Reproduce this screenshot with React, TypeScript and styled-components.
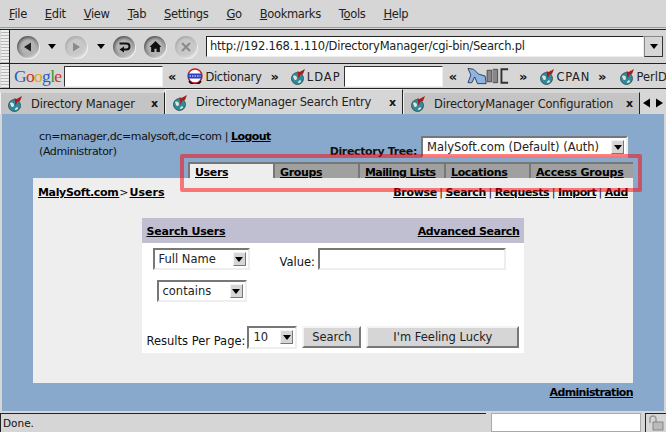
import React from "react";
import styled, { createGlobalStyle } from "styled-components";

const GlobalStyle = createGlobalStyle`
	html, body {
		margin: 0;
		padding: 0;
		background: #d6d6d6;
	}
`;

const Globe = () => (
	<svg width="17" height="17" viewBox="0 0 17 17">
		<circle cx="7.5" cy="10.5" r="6" fill="#2f8a9c" stroke="#37505a" strokeWidth="0.9" />
		<path d="M3 8c2-1 4 0 4 2s-2 3-3 1zM8 14c1-2 3-2 3-1s-1 2-3 2z" fill="#d8e8dc" />
		<path d="M15 1L9.5 4 7.500 3l1 8 2-4.500 2.500-.5z" fill="#a81c1c" />
	</svg>
);

const Arrow = ({ dir, color }: { dir: string; color: string }) => (
	<svg width="12" height="12" viewBox="0 0 12 12">
		{dir === "left" && <path d="M9 1.500v9L2 6z" fill={color} />}
		{dir === "right" && <path d="M3 1.500v9L10 6z" fill={color} />}
	</svg>
);

const App = () => {
	return (
		<Page>
			<GlobalStyle />
			<MenuBar>
				{[
					["F", "ile"],
					["E", "dit"],
					["V", "iew"],
					["T", "ab"],
					["S", "ettings"],
					["G", "o"],
					["B", "ookmarks"],
				].map(([a, b]) => (
					<MenuItem key={a}>
						<u>{a}</u>
						{b}
					</MenuItem>
				))}
				<MenuItem>
					T<u>o</u>ols
				</MenuItem>
				<MenuItem>
					<u>H</u>elp
				</MenuItem>
			</MenuBar>
			<NavBar>
				<Grip />
				<NavButton $left={7}>
					<Arrow dir="left" color="#222" />
				</NavButton>
				<Caret $left={9} />
				<NavButton $left={9} $off>
					<Arrow dir="right" color="#8a8a8a" />
				</NavButton>
				<Caret $left={10} />
				<NavButton $left={8}>
					<svg width="14" height="14" viewBox="0 0 14 14">
						<path d="M2.500 3.500h7a2.800 2.800 0 0 1 0 6H6" fill="none" stroke="#111" strokeWidth="2" />
						<path d="M7 6.500l-4.500 3 4.500 3z" fill="#111" />
					</svg>
				</NavButton>
				<NavButton $left={9}>
					<svg width="13" height="13" viewBox="0 0 12 12">
						<path d="M6 1L.5 6.500H2V11h3V8h2v3h3V6.500h1.500z" fill="#111" />
					</svg>
				</NavButton>
				<NavButton $left={9} $off>
					<svg width="12" height="12" viewBox="0 0 12 12">
						<path d="M2 2l8 8M10 2l-8 8" stroke="#8a8a8a" strokeWidth="2" />
					</svg>
				</NavButton>
				<UrlBox>http://192.168.1.110/DirectoryManager/cgi-bin/Search.pl</UrlBox>
				<UrlDrop>
					<DropTriangle />
				</UrlDrop>
			</NavBar>
			<BookmarkBar>
				<Grip />
				<GoogleLogo>
					<span style={{ color: "#2a5bc8" }}>G</span>
					<span style={{ color: "#d0301f" }}>o</span>
					<span style={{ color: "#e0a810" }}>o</span>
					<span style={{ color: "#2a5bc8" }}>g</span>
					<span style={{ color: "#2f9a3a" }}>l</span>
					<span style={{ color: "#d0301f" }}>e</span>
				</GoogleLogo>
				<BarInput $left={3} />
				<Chevron $left={5}>«</Chevron>
				<DictIcon $left={11}>
					<svg width="16" height="16" viewBox="0 0 16 16">
						<circle cx="8" cy="8" r="7" fill="#fff" stroke="#c02020" strokeWidth="1.400" />
						<path d="M2 13a7 7 0 0 0 12 0" fill="none" stroke="#111" strokeWidth="1.600" />
						<rect x="1" y="5.500" width="14" height="5" fill="#2a3fc0" />
						<path d="M2.500 8h11" stroke="#fff" strokeWidth="1.200" strokeDasharray="1.500 1" />
					</svg>
				</DictIcon>
				<BarLabel $left={2} $spacing={-0.3}>
					Dictionary
				</BarLabel>
				<Chevron $left={9}>»</Chevron>
				<DictIcon $left={11}>
					<Globe />
				</DictIcon>
				<BarLabel $left={0} $spacing={1}>
					LDAP
				</BarLabel>
				<BarInput $left={3} />
				<Chevron $left={6}>«</Chevron>
				<DictIcon $left={10}>
					<svg width="44" height="18" viewBox="0 0 46 18">
						<path d="M1 1l6 1 5 5 7 2 1 8H11L8 10 5 16H1l3-8z" fill="#8db4e4" stroke="#234" strokeWidth="0.900" />
						<path d="M21 3h5v12h-5zM27 2h5v14h-5" fill="#888" stroke="#333" strokeWidth="0.800" />
						<path d="M43 2h-7v14h7" fill="none" stroke="#333" strokeWidth="2" />
					</svg>
				</DictIcon>
				<Chevron $left={8}>»</Chevron>
				<DictIcon $left={12}>
					<Globe />
				</DictIcon>
				<BarLabel $left={0} $spacing={0.7}>
					CPAN
				</BarLabel>
				<Chevron $left={8}>»</Chevron>
				<DictIcon $left={13}>
					<Globe />
				</DictIcon>
				<BarLabel $left={0} $spacing={0}>
					PerlD
				</BarLabel>
			</BookmarkBar>
			<TabStrip>
				<BrowserTab $width={165}>
					<Globe />
					<TabTitle>Directory Manager</TabTitle>
					<TabClose>x</TabClose>
				</BrowserTab>
				<BrowserTab $width={238} $active>
					<Globe />
					<TabTitle>DirectoryManager Search Entry</TabTitle>
					<TabClose>x</TabClose>
				</BrowserTab>
				<BrowserTab $width={237}>
					<Globe />
					<TabTitle>DirectoryManager Configuration</TabTitle>
					<TabClose>x</TabClose>
				</BrowserTab>
				<TabArrows>
					<Arrow dir="left" color="#000" />
					<Arrow dir="right" color="#000" />
				</TabArrows>
			</TabStrip>
			<Content>
				<TopRow>
					<UserInfo>
						cn=manager,dc=malysoft,dc=com | <BoldLink $spacing={-0.6}>Logout</BoldLink>
						<br />
						(Administrator)
					</UserInfo>
					<TreePicker>
						<TreeLabel>Directory Tree:</TreeLabel>
						<FakeSelect $width={207} $height={22}>
							MalySoft.com (Default) (Auth)
							<SelectButton>
								<DropTriangle />
							</SelectButton>
						</FakeSelect>
					</TreePicker>
				</TopRow>
				<SectionTabs>
					<SectionTab $width={85} $active>
						<BoldLink>Users</BoldLink>
					</SectionTab>
					<SectionTab $width={85}>
						<BoldLink>Groups</BoldLink>
					</SectionTab>
					<SectionTab $width={86}>
						<BoldLink $spacing={-0.6}>Mailing Lists</BoldLink>
					</SectionTab>
					<SectionTab $width={85}>
						<BoldLink>Locations</BoldLink>
					</SectionTab>
					<SectionTab $width={104}>
						<BoldLink $spacing={-0.2}>Access Groups</BoldLink>
					</SectionTab>
				</SectionTabs>
				<Panel>
					<PanelHead>
						<Crumbs>
							<BoldLink>MalySoft.com </BoldLink>&gt; <BoldLink $spacing={0}>Users</BoldLink>
						</Crumbs>
						<ActionLinks>
							<BoldLink>Browse</BoldLink> | <BoldLink>Search</BoldLink> | <BoldLink>Requests</BoldLink> |{" "}
							<BoldLink $spacing={-0.6}>Import</BoldLink> | <BoldLink>Add</BoldLink>
						</ActionLinks>
					</PanelHead>
					<SearchBox>
						<SearchTitle>
							<BoldLink $spacing={-0.2}>Search Users</BoldLink>
							<BoldLink>Advanced Search</BoldLink>
						</SearchTitle>
						<SearchBody>
							<FieldRow>
								<FakeSelect $width={97} $height={22}>
									Full Name
									<SelectButton>
										<DropTriangle />
									</SelectButton>
								</FakeSelect>
								<ValueLabel>Value:</ValueLabel>
								<ValueInput />
							</FieldRow>
							<ContainsRow>
								<FakeSelect $width={90} $height={22}>
									contains
									<SelectButton>
										<DropTriangle />
									</SelectButton>
								</FakeSelect>
							</ContainsRow>
							<SubmitRow>
								<ResultsLabel>Results Per Page:</ResultsLabel>
								<FakeSelect $width={50} $height={23}>
									10
									<SelectButton>
										<DropTriangle />
									</SelectButton>
								</FakeSelect>
								<PushButton $width={59}>Search</PushButton>
								<PushButton $width={153}>I'm Feeling Lucky</PushButton>
							</SubmitRow>
						</SearchBody>
					</SearchBox>
				</Panel>
				<FooterLink>
					<BoldLink $spacing={-0.63}>Administration</BoldLink>
				</FooterLink>
				<Highlight />
			</Content>
			<StatusBar>
				<StatusText>Done.</StatusText>
				<StatusBlank />
				<LockBox>
					<svg width="16" height="16" viewBox="0 0 16 16">
						<path d="M2 8V4a3 3 0 0 1 6 0v3" fill="none" stroke="#999" strokeWidth="1.500" />
						<rect x="5" y="7" width="10" height="8" fill="#bbb" stroke="#777" strokeWidth="0.800" />
					</svg>
				</LockBox>
			</StatusBar>
		</Page>
	);
};

export default App;

const uiFont = `"DejaVu Sans", sans-serif`;

const Page = styled.div`
	width: 666px;
	height: 432px;
	overflow: hidden;
	display: flex;
	flex-direction: column;
	background: #d6d6d6;
	font-family: ${uiFont};
	font-size: 12px;
	color: #111;
`;

const MenuBar = styled.div`
	height: 28px;
	box-sizing: border-box;
	display: flex;
	align-items: center;
	padding: 1px 0 0 9px;
	gap: 18px;
	border-bottom: 1px solid #9a9a9a;
	margin-bottom: 1px;
`;

const MenuItem = styled.span`
	font-size: 11.5px;
	letter-spacing: -0.35px;
	color: #222;
`;

const NavBar = styled.div`
	height: 35px;
	box-sizing: border-box;
	display: flex;
	align-items: center;
	border-top: 1px solid #222;
	border-bottom: 1px solid #222;
	padding-right: 3px;
`;

const BookmarkBar = styled.div`
	height: 25px;
	box-sizing: border-box;
	display: flex;
	align-items: center;
	border-bottom: 1px solid #222;
	overflow: hidden;
	white-space: nowrap;
`;

const Grip = styled.div`
	width: 8px;
	align-self: stretch;
	flex: none;
	margin-left: 1px;
	border-right: 1px solid #222;
	background: repeating-linear-gradient(0deg, #b8b8b8 0 1px, #eee 1px 3px);
`;

const NavButton = styled.div<{ $left: number; $off?: boolean }>`
	width: 22px;
	height: 22px;
	flex: none;
	margin-left: ${(p) => p.$left}px;
	border-radius: 50%;
	display: flex;
	align-items: center;
	justify-content: center;
	background: ${(p) =>
		p.$off
			? "radial-gradient(circle, #c8c8c8 0 45%, transparent 72%), linear-gradient(150deg, #9a9a9a, #c0c0c0 55%, #f2f2f2)"
			: "radial-gradient(circle, #b4b4b4 0 42%, transparent 72%), linear-gradient(150deg, #333, #858585 55%, #f4f4f4)"};
	box-shadow: 1px 1px 0 #efefef;
`;

const Caret = styled.div<{ $left: number }>`
	flex: none;
	margin-left: ${(p) => p.$left}px;
	width: 0;
	height: 0;
	border-left: 4px solid transparent;
	border-right: 4px solid transparent;
	border-top: 5px solid #000;
`;

const UrlBox = styled.div`
	flex: 1;
	margin-left: 9px;
	height: 21px;
	box-sizing: border-box;
	background: #fff;
	border: 1px solid #222;
	border-right-color: #eee;
	border-bottom-color: #eee;
	padding-left: 3px;
	line-height: 18px;
	font-size: 11.5px;
	letter-spacing: -0.22px;
	color: #222;
`;

const UrlDrop = styled.div`
	width: 19px;
	height: 21px;
	flex: none;
	box-sizing: border-box;
	background: #d6d6d6;
	border: 1px solid #888;
	border-right-color: #333;
	border-bottom-color: #333;
	display: flex;
	align-items: center;
	justify-content: center;
`;

const DropTriangle = styled.div`
	width: 0;
	height: 0;
	border-left: 4px solid transparent;
	border-right: 4px solid transparent;
	border-top: 5px solid #000;
`;

const GoogleLogo = styled.div`
	margin-left: 4px;
	font-family: "Liberation Serif", serif;
	font-size: 17.5px;
	letter-spacing: -0.7px;
	width: 47px;
	flex: none;
`;

const BarInput = styled.div<{ $left: number }>`
	width: 99px;
	height: 21px;
	flex: none;
	box-sizing: border-box;
	margin-left: ${(p) => p.$left}px;
	background: #fff;
	border: 1px solid #333;
	border-right-color: #eee;
	border-bottom-color: #eee;
`;

const Chevron = styled.span<{ $left: number }>`
	margin-left: ${(p) => p.$left}px;
	font-weight: bold;
	font-size: 13px;
`;

const DictIcon = styled.span<{ $left: number }>`
	display: flex;
	flex: none;
	margin-left: ${(p) => p.$left}px;
`;

const BarLabel = styled.span<{ $left: number; $spacing: number }>`
	margin-left: ${(p) => p.$left}px;
	padding-top: 2px;
	font-size: 11.5px;
	letter-spacing: ${(p) => p.$spacing}px;
	color: #222;
`;

const TabStrip = styled.div`
	height: 25px;
	display: flex;
	align-items: flex-end;
`;

const BrowserTab = styled.div<{ $width: number; $active?: boolean }>`
	width: ${(p) => p.$width}px;
	height: ${(p) => (p.$active ? 25 : 22)}px;
	flex: none;
	box-sizing: border-box;
	display: flex;
	align-items: center;
	padding: 0 6px;
	background: ${(p) => (p.$active ? "#d6d6d6" : "#c4c4c4")};
	border-top: 1px solid ${(p) => (p.$active ? "#f0f0f0" : "#d6d6d6")};
	border-left: 1px solid #f0f0f0;
	border-right: 1px solid #222;
`;

const TabTitle = styled.span`
	flex: 1;
	margin-left: 7px;
	font-size: 11.5px;
	letter-spacing: -0.2px;
	color: #222;
	white-space: nowrap;
`;

const TabClose = styled.span`
	font-weight: bold;
	font-size: 11px;
`;

const TabArrows = styled.div`
	flex: 1;
	height: 22px;
	display: flex;
	align-items: center;
	justify-content: center;
`;

const Content = styled.div`
	position: relative;
	height: 297px;
	box-sizing: border-box;
	margin: 0 2px;
	padding: 15px 31px 0;
	background: #88a9cc;
	display: flex;
	flex-direction: column;
`;

const TopRow = styled.div`
	height: 33px;
	display: flex;
	justify-content: space-between;
`;

const UserInfo = styled.div`
	font-size: 11px;
	letter-spacing: -0.4px;
	line-height: 15px;
	color: #111;
	margin-left: 6px;
`;

const BoldLink = styled.span<{ $spacing?: number }>`
	font-weight: bold;
	text-decoration: underline;
	color: #000;
	font-size: 11px;
	letter-spacing: ${(p) => p.$spacing ?? -0.35}px;
`;

const TreePicker = styled.div`
	display: flex;
	align-items: flex-end;
	gap: 4px;
	margin-right: 5px;
	margin-top: 7px;
	height: 22px;
`;

const TreeLabel = styled.span`
	font-weight: bold;
	font-size: 11px;
	letter-spacing: -0.35px;
`;

const FakeSelect = styled.div<{ $width: number; $height: number }>`
	width: ${(p) => p.$width}px;
	height: ${(p) => p.$height}px;
	flex: none;
	box-sizing: border-box;
	position: relative;
	background: #fff;
	border: 2px solid #eee;
	border-top-color: #777;
	border-left-color: #777;
	padding-left: 4px;
	font-size: 11.5px;
	line-height: 19px;
	color: #222;
	white-space: nowrap;
`;

const SelectButton = styled.span`
	position: absolute;
	right: 2px;
	top: 2px;
	width: 13px;
	height: 14px;
	box-sizing: border-box;
	background: #d6d6d6;
	border: 1px solid #777;
	border-top-color: #f4f4f4;
	border-left-color: #f4f4f4;
	display: flex;
	align-items: center;
	justify-content: center;
`;

const SectionTabs = styled.div`
	display: flex;
	justify-content: flex-end;
	height: 16px;
`;

const SectionTab = styled.div<{ $width: number; $active?: boolean }>`
	width: ${(p) => p.$width}px;
	height: 16px;
	box-sizing: border-box;
	background: ${(p) => (p.$active ? "#eeeeee" : "#a0a0a0")};
	border-top: 2px solid #777;
	border-left: 2px solid #777;
	padding-left: 5px;
	line-height: 16px;
	white-space: nowrap;
`;

const Panel = styled.div`
	height: 205px;
	box-sizing: border-box;
	background: #eeeeee;
	padding: 6px 5px 0;
	display: flex;
	flex-direction: column;
	align-items: center;
`;

const PanelHead = styled.div`
	width: 100%;
	height: 15px;
	display: flex;
	justify-content: space-between;
	font-size: 11px;
	line-height: 17px;
`;

const Crumbs = styled.div`
	word-spacing: -2.5px;
`;

const ActionLinks = styled.div`
	word-spacing: -1px;
`;

const SearchBox = styled.div`
	width: 382px;
	margin-top: 19px;
	background: #fff;
	margin-left: -1px;
`;

const SearchTitle = styled.div`
	height: 25px;
	box-sizing: border-box;
	background: #c0bed1;
	display: flex;
	justify-content: space-between;
	align-items: center;
	padding: 1px 4px 0 5px;
`;

const SearchBody = styled.div`
	height: 110px;
	box-sizing: border-box;
	padding-top: 5px;
	display: flex;
	flex-direction: column;
`;

const FieldRow = styled.div`
	display: flex;
	margin-left: 11px;
`;

const ValueLabel = styled.span`
	margin-left: 30px;
	margin-right: 3px;
	font-size: 11.5px;
	line-height: 28px;
	height: 22px;
`;

const ValueInput = styled.div`
	width: 188px;
	height: 22px;
	box-sizing: border-box;
	border: 2px solid #eee;
	border-top-color: #777;
	border-left-color: #777;
	background: #fff;
`;

const ContainsRow = styled.div`
	margin: 10px 0 0 15px;
`;

const SubmitRow = styled.div`
	margin: 24px 0 0 5px;
	display: flex;
	align-items: flex-start;
`;

const ResultsLabel = styled.span`
	font-size: 11.5px;
	line-height: 30px;
	height: 23px;
	margin-right: 2px;
`;

const PushButton = styled.div<{ $width: number }>`
	width: ${(p) => p.$width}px;
	height: 22px;
	margin-left: 5px;
	flex: none;
	box-sizing: border-box;
	background: #d6d6d6;
	border: 2px solid #f4f4f4;
	border-right-color: #777;
	border-bottom-color: #777;
	text-align: center;
	font-size: 11.5px;
	line-height: 19px;
	color: #222;
`;

const FooterLink = styled.div`
	text-align: right;
	margin-top: 2px;
	line-height: 15px;
`;

const Highlight = styled.div`
	position: absolute;
	left: 178px;
	top: 40px;
	width: 462px;
	height: 38px;
	box-sizing: border-box;
	border: 4px solid rgba(255, 0, 0, 0.5);
	border-radius: 2px;
	pointer-events: none;
`;

const StatusBar = styled.div`
	flex: 1;
	display: flex;
	align-items: stretch;
	margin-top: 2px;
`;

const StatusText = styled.div`
	width: 486px;
	box-sizing: border-box;
	border-top: 1px solid #222;
	border-left: 1px solid #222;
	font-size: 10.5px;
	line-height: 18px;
	padding-left: 2px;
`;

const StatusBlank = styled.div`
	width: 150px;
	margin-left: 5px;
	background: #fff;
	border: 1px solid #aaa;
	box-sizing: border-box;
`;

const LockBox = styled.div`
	flex: 1;
	box-sizing: border-box;
	margin-left: 4px;
	border-top: 1px solid #222;
	border-left: 1px solid #222;
	display: flex;
	align-items: center;
	justify-content: center;
`;
